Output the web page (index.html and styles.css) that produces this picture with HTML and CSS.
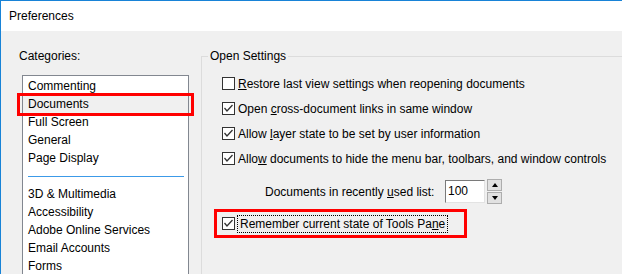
FILE: index.html
```html
<!doctype html>
<html lang="en">

<head>
    <meta charset="utf-8">
    <title>Preferences</title>
    <link rel="stylesheet" href="styles.css">
</head>

<body>
    <div class="window">
        <div class="titlebar">Preferences</div>

        <div class="content">
            <div class="categories">
                <div class="cat_label">Categories:</div>
                <ul class="listbox">
                    <li>Commenting</li>
                    <li class="selected marked">Documents</li>
                    <li>Full Screen</li>
                    <li>General</li>
                    <li>Page Display</li>
                    <li class="separator"></li>
                    <li>3D &amp; Multimedia</li>
                    <li>Accessibility</li>
                    <li>Adobe Online Services</li>
                    <li>Email Accounts</li>
                    <li>Forms</li>
                </ul>
            </div>

            <fieldset class="group">
                <legend>Open Settings</legend>

                <div class="option">
                    <span class="check"></span>
                    <span class="text"><u>R</u>estore last view settings when reopening documents</span>
                </div>
                <div class="option">
                    <span class="check checked"><svg viewBox="0 0 11 11"><polyline points="1.5,5 4,8 9.5,2" /></svg></span>
                    <span class="text">Open <u>c</u>ross-document links in same window</span>
                </div>
                <div class="option">
                    <span class="check checked"><svg viewBox="0 0 11 11"><polyline points="1.5,5 4,8 9.5,2" /></svg></span>
                    <span class="text">Allow <u>l</u>ayer state to be set by user information</span>
                </div>
                <div class="option">
                    <span class="check checked"><svg viewBox="0 0 11 11"><polyline points="1.5,5 4,8 9.5,2" /></svg></span>
                    <span class="text">Allo<u>w</u> documents to hide the menu bar, toolbars, and window controls</span>
                </div>

                <div class="recent">
                    <span class="recent_label">Documents in recently <u>u</u>sed list:</span>
                    <span class="number_box">100</span>
                    <span class="spinner">
                        <span class="spin_btn"><span class="arrow_up"></span></span>
                        <span class="spin_btn"><span class="arrow_down"></span></span>
                    </span>
                </div>

                <div class="option focused marked_row">
                    <span class="check checked"><svg viewBox="0 0 11 11"><polyline points="1.5,5 4,8 9.5,2" /></svg></span>
                    <span class="text focus_rect">Remember current state of Tools Pa<u>n</u>e</span>
                </div>
            </fieldset>
        </div>
    </div>
</body>

</html>
```

FILE: styles.css
```css
/* Preferences dialog */
body {
    margin: 0;
    width: 622px;
    height: 274px;
    overflow: hidden;
    font-family: "Liberation Sans", Arial, sans-serif;
    font-size: 12px;
    color: #000;
}

.window {
    height: 273px;
    border-top: 1px solid #1883d7;
    border-left: 1px solid #1883d7;
    background-color: #f0f0f0;
    display: flex;
    flex-direction: column;
    overflow: hidden;
}

.titlebar {
    height: 30px;
    line-height: 31px;
    padding-left: 8px;
    background-color: #fff;
    flex-shrink: 0;
}

.content {
    display: flex;
    padding: 16px 0 0 18px;
    flex: 1;
}

.categories {
    width: 170px;
    flex-shrink: 0;
}

.cat_label {
    line-height: 18px;
    margin-bottom: 10px;
}

.listbox {
    list-style: none;
    margin: 0 0 0 3px;
    padding: 1px 0 0;
    width: 167px;
    height: 240px;
    box-sizing: border-box;
    border: 1px solid #828790;
    background-color: #fff;
}

.listbox li {
    position: relative;
    height: 18px;
    line-height: 18px;
    padding-left: 5px;
    white-space: nowrap;
}

.listbox li.selected {
    background-color: #f0f0f0;
}

.listbox li.marked::after {
    content: "";
    position: absolute;
    top: -2px;
    bottom: -3px;
    left: -6px;
    right: -6px;
    border: 3px solid #f00;
}

.listbox li.separator {
    display: flex;
    align-items: center;
    padding: 0 4px 0 5px;
}

.listbox li.separator::before {
    content: "";
    flex: 1;
    height: 1px;
    background-color: #3c9ae8;
}

.group {
    margin: 0 0 0 12px;
    padding: 6px 0 0 20px;
    border: 1px solid #dcdcdc;
    border-right: none;
    border-bottom: none;
    flex: 1;
    min-width: 0;
}

.group legend {
    margin-left: -14px;
    padding: 0 2px;
    line-height: 18px;
}

.option {
    position: relative;
    display: flex;
    align-items: center;
    height: 25px;
    white-space: nowrap;
}

.check {
    width: 13px;
    height: 13px;
    box-sizing: border-box;
    border: 1px solid #333;
    background-color: #fff;
    flex-shrink: 0;
    display: flex;
}

.check svg {
    width: 11px;
    height: 11px;
    fill: none;
    stroke: #333;
    stroke-width: 1.3;
}

.option .text {
    margin-left: 3px;
}

.recent {
    display: flex;
    align-items: center;
    height: 25px;
    margin-top: 8px;
    padding-left: 43px;
    white-space: nowrap;
}

.recent_label {
    width: 180px;
}

.number_box {
    width: 40px;
    height: 23px;
    line-height: 21px;
    box-sizing: border-box;
    padding-left: 2px;
    border: 1px solid #7a7a7a;
    border-right-color: #e3e3e3;
    border-bottom-color: #e3e3e3;
    background-color: #fff;
}

.spinner {
    display: flex;
    flex-direction: column;
    gap: 1px;
    margin-left: 2px;
}

.spin_btn {
    width: 15px;
    height: 12px;
    box-sizing: border-box;
    border: 1px solid #adadad;
    background-color: #e1e1e1;
    display: flex;
    align-items: center;
    justify-content: center;
}

.arrow_up {
    border-left: 3px solid transparent;
    border-right: 3px solid transparent;
    border-bottom: 4px solid #000;
}

.arrow_down {
    border-left: 3px solid transparent;
    border-right: 3px solid transparent;
    border-top: 4px solid #000;
}

.focused {
    margin-top: 7px;
}

.focus_rect {
    outline: 1px dotted #000;
    outline-offset: 0;
    padding: 1px 2px;
}

.marked_row::after {
    content: "";
    position: absolute;
    top: -2px;
    bottom: -2px;
    left: -8px;
    width: 247px;
    border: 3px solid #f00;
}
```
